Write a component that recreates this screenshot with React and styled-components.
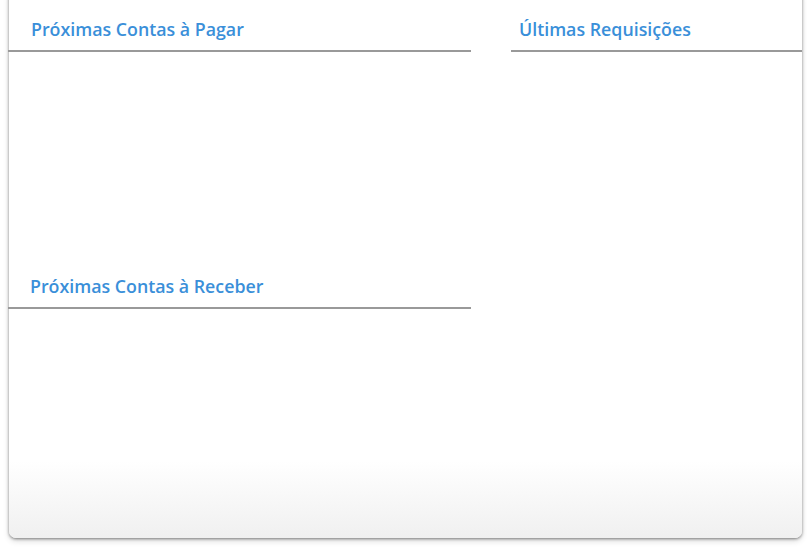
import React from 'react';
import styled, { createGlobalStyle } from 'styled-components';

const GlobalStyle = createGlobalStyle`
  html, body {
    margin: 0;
    padding: 0;
    background: #ffffff;
    font-family: "Open Sans", "Liberation Sans", sans-serif;
  }
`;

const Page = styled.div`
  width: 807px;
  height: 547px;
  overflow: hidden;
  padding: 0 5px 0 9px;
  box-sizing: border-box;
`;

const Panel = styled.div`
  margin-top: -12px;
  height: 550px;
  box-sizing: border-box;
  border-radius: 7px;
  background: linear-gradient(to bottom, #ffffff 0%, #ffffff 86%, #f0f0f0 100%);
  box-shadow: 0 1px 3px rgba(0, 0, 0, 0.45), 0 3px 6px rgba(0, 0, 0, 0.14);
  display: grid;
  grid-template-columns: 462px 291px;
  column-gap: 40px;
  align-items: start;
`;

const Column = styled.div`
  display: flex;
  flex-direction: column;
`;

const Section = styled.section`
  display: flex;
  flex-direction: column;
`;

const Header = styled.h2`
  margin: 0;
  padding: 29px 0 0 ${({ indent }) => indent}px;
  height: 64px;
  box-sizing: border-box;
  font-size: 17.8px;
  line-height: 24px;
  font-weight: 600;
  color: #3a8fd9;
  border-bottom: 2px solid #999999;
  margin-left: ${({ bleed }) => bleed || 0}px;
`;

const Body = styled.div`
  height: ${({ h }) => h}px;
`;

export default function App() {
  return (
    <>
      <GlobalStyle />
      <Page>
        <Panel>
          <Column>
            <Section>
              <Header indent={23} bleed={-1}>Próximas Contas à Pagar</Header>
              <Body h={193} />
            </Section>
            <Section>
              <Header indent={22} bleed={-1}>Próximas Contas à Receber</Header>
            </Section>
          </Column>
          <Column>
            <Section>
              <Header indent={8}>Últimas Requisições</Header>
            </Section>
          </Column>
        </Panel>
      </Page>
    </>
  );
}
